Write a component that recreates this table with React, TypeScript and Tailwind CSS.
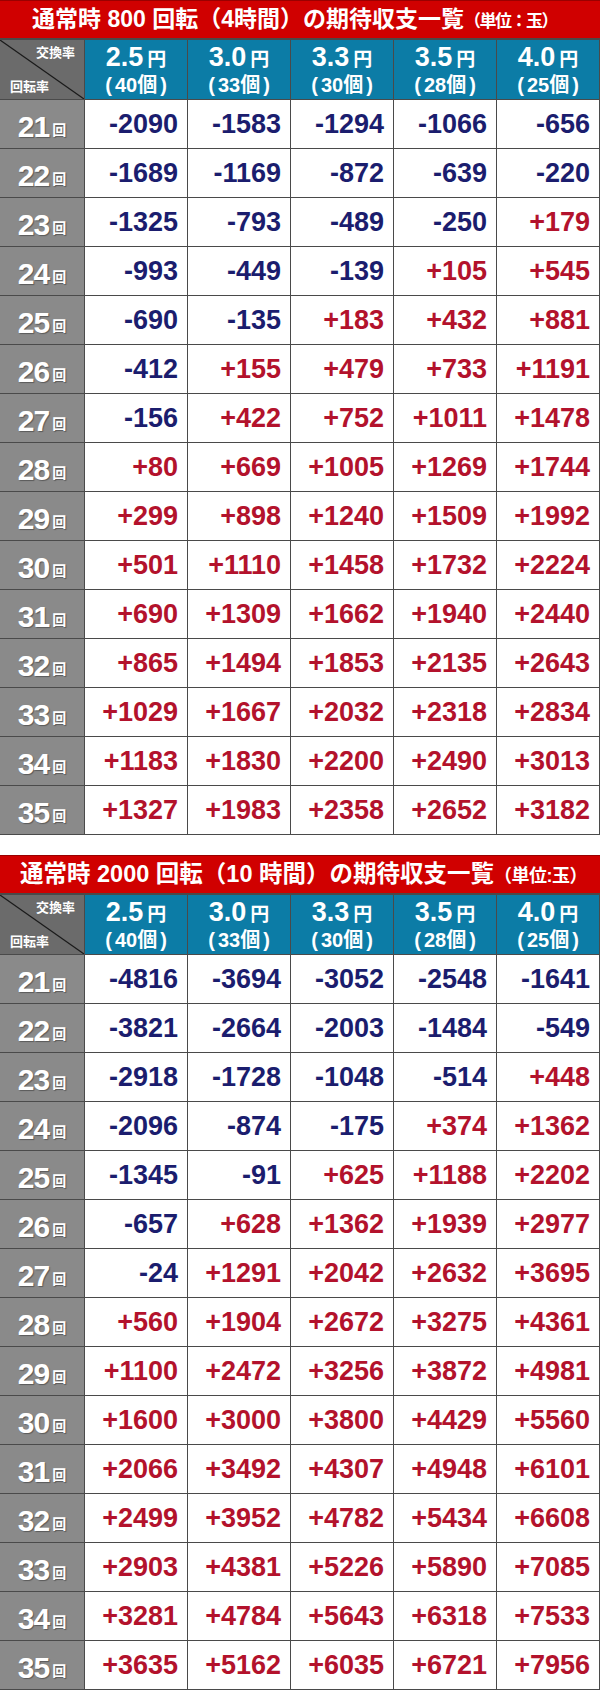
import React from "react";

const rates = [
  { yen: "2.5", ko: "40" },
  { yen: "3.0", ko: "33" },
  { yen: "3.3", ko: "30" },
  { yen: "3.5", ko: "28" },
  { yen: "4.0", ko: "25" },
];

const t1: number[][] = [
  [-2090, -1583, -1294, -1066, -656],
  [-1689, -1169, -872, -639, -220],
  [-1325, -793, -489, -250, 179],
  [-993, -449, -139, 105, 545],
  [-690, -135, 183, 432, 881],
  [-412, 155, 479, 733, 1191],
  [-156, 422, 752, 1011, 1478],
  [80, 669, 1005, 1269, 1744],
  [299, 898, 1240, 1509, 1992],
  [501, 1110, 1458, 1732, 2224],
  [690, 1309, 1662, 1940, 2440],
  [865, 1494, 1853, 2135, 2643],
  [1029, 1667, 2032, 2318, 2834],
  [1183, 1830, 2200, 2490, 3013],
  [1327, 1983, 2358, 2652, 3182],
];

const t2: number[][] = [
  [-4816, -3694, -3052, -2548, -1641],
  [-3821, -2664, -2003, -1484, -549],
  [-2918, -1728, -1048, -514, 448],
  [-2096, -874, -175, 374, 1362],
  [-1345, -91, 625, 1188, 2202],
  [-657, 628, 1362, 1939, 2977],
  [-24, 1291, 2042, 2632, 3695],
  [560, 1904, 2672, 3275, 4361],
  [1100, 2472, 3256, 3872, 4981],
  [1600, 3000, 3800, 4429, 5560],
  [2066, 3492, 4307, 4948, 6101],
  [2499, 3952, 4782, 5434, 6608],
  [2903, 4381, 5226, 5890, 7085],
  [3281, 4784, 5643, 6318, 7533],
  [3635, 5162, 6035, 6721, 7956],
];

const font = {
  fontFamily: '"Liberation Sans", "Noto Sans CJK JP", Arial, sans-serif',
};

function Table({
  title,
  data,
}: {
  title: React.ReactNode;
  data: number[][];
}) {
  return (
    <div className="w-[600px]">
      <div className="h-[38px] bg-[#d00000] border-t border-[#9a0000] flex items-center text-white font-bold whitespace-nowrap">
        {title}
      </div>
      <div className="grid grid-cols-[84px_repeat(5,102px)] gap-px bg-[#4a4a4a] pt-[2px] pr-px pb-px">
        <div className="relative h-[59px] bg-[#6b6b6b] overflow-hidden">
          <svg
            className="absolute inset-0"
            width="84"
            height="59"
            viewBox="0 0 84 59"
          >
            <line x1="0" y1="0" x2="84" y2="59" stroke="#1a1a1a" strokeWidth="1.2" />
          </svg>
          <span className="absolute right-[9px] top-[6px] text-[13px] font-bold text-white leading-none">
            交換率
          </span>
          <span className="absolute left-[10px] bottom-[6px] text-[13px] font-bold text-white leading-none">
            回転率
          </span>
        </div>
        {rates.map((r) => (
          <div
            key={r.yen}
            className="h-[59px] bg-[#0c7ca6] flex flex-col items-center justify-center text-white font-bold leading-none"
          >
            <div className="flex items-baseline">
              <span className="text-[27px] leading-none">{r.yen}</span>
              <span className="text-[19px] leading-none ml-[4px]">円</span>
            </div>
            <div className="text-[20px] leading-none mt-[4px] flex items-baseline">
              <span className="mr-[3px]">(</span>
              <span>{r.ko}</span>
              <span>個</span>
              <span className="ml-[3px]">)</span>
            </div>
          </div>
        ))}
        {data.map((row, i) => (
          <React.Fragment key={i}>
            <div className="h-[48px] bg-[#8a8a8a] flex items-center justify-center text-white font-bold [text-shadow:1px_1px_1px_rgba(0,0,0,0.35)]">
              <span className="text-[30px] leading-none tracking-[-1px] mt-[6px]">
                {21 + i}
              </span>
              <span className="text-[14px] leading-none ml-[3px] mt-[12px]">回</span>
            </div>
            {row.map((v, j) => (
              <div
                key={j}
                className={`h-[48px] bg-white flex items-center justify-end pr-[9px] text-[27px] font-bold ${
                  v < 0 ? "text-[#1b1d6e]" : "text-[#b3122c]"
                }`}
              >
                {v < 0 ? `-${Math.abs(v)}` : `+${v}`}
              </div>
            ))}
          </React.Fragment>
        ))}
      </div>
    </div>
  );
}

export default function App() {
  return (
    <div className="w-[600px] h-[1702px] bg-white" style={font}>
      <Table
        data={t1}
        title={
          <div className="pl-[32px] flex items-baseline">
            <span className="text-[23px]">通常時 800 回転（4時間）の期待収支一覧</span>
            <span className="text-[17px] tracking-[-1.5px]">（単位：玉）</span>
          </div>
        }
      />
      <div className="h-[20px]" />
      <Table
        data={t2}
        title={
          <div className="pl-[20px] flex items-baseline">
            <span className="text-[23.5px]">通常時 2000 回転（10 時間）の期待収支一覧</span>
            <span className="text-[18px] tracking-[-0.5px]">（単位:玉）</span>
          </div>
        }
      />
    </div>
  );
}
